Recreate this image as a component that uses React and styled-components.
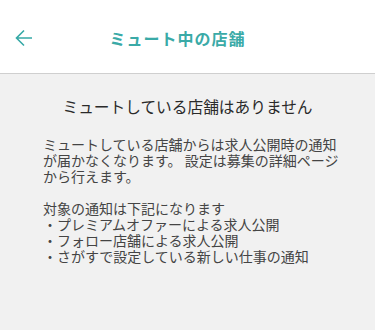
import styled, { createGlobalStyle } from "styled-components";

const GlobalStyle = createGlobalStyle`
  html, body {
    margin: 0;
    padding: 0;
    background: #f1f1f1;
  }
  body {
    font-family: "Noto Sans CJK JP", "Noto Sans", sans-serif;
    color: #333;
  }
`;

const Page = styled.div`
  min-height: 330px;
  background: #f1f1f1;
`;

const Header = styled.header`
  display: grid;
  grid-template-columns: 48px 1fr 68px;
  align-items: center;
  height: 73px;
  background: #fff;
  border-bottom: 1px solid #cfcfcf;
`;

const BackButton = styled.button`
  display: flex;
  align-items: center;
  justify-content: center;
  width: 48px;
  height: 48px;
  padding: 0;
  border: none;
  background: none;
  color: #36a9a6;
  cursor: pointer;
  margin-top: 2px;
`;

const Title = styled.h1`
  margin: 2px 0 0;
  text-align: center;
  font-size: 16px;
  font-weight: 700;
  color: #3aaaa7;
  letter-spacing: 1px;
`;

const Body = styled.main`
  padding: 21px 20px 0 43px;
`;

const Heading = styled.h2`
  margin: 0 0 17px -23px;
  text-align: center;
  font-size: 15.7px;
  line-height: 24px;
  font-weight: 400;
  color: #2a2a2a;
`;

const Text = styled.p`
  margin: 0;
  font-size: 14px;
  line-height: 16px;
  color: #444;
  white-space: nowrap;
`;

const Gap = styled.div`
  height: 16px;
`;

function BackArrow() {
  return (
    <svg width="18" height="18" viewBox="0 0 18 18" fill="none">
      <path
        d="M17 9H1.5M9 1.5L1.5 9 9 16.5"
        stroke="currentColor"
        strokeWidth="1.6"
      />
    </svg>
  );
}

export default function App() {
  return (
    <>
      <GlobalStyle />
      <Page>
        <Header>
          <BackButton aria-label="戻る">
            <BackArrow />
          </BackButton>
          <Title>ミュート中の店舗</Title>
        </Header>
        <Body>
          <Heading>ミュートしている店舗はありません</Heading>
          <Text>
            ミュートしている店舗からは求人公開時の通知
            <br />
            が届かなくなります。 設定は募集の詳細ページ
            <br />
            から行えます。
          </Text>
          <Gap />
          <Text>
            対象の通知は下記になります
            <br />
            ・プレミアムオファーによる求人公開
            <br />
            ・フォロー店舗による求人公開
            <br />
            ・さがすで設定している新しい仕事の通知
          </Text>
        </Body>
      </Page>
    </>
  );
}
